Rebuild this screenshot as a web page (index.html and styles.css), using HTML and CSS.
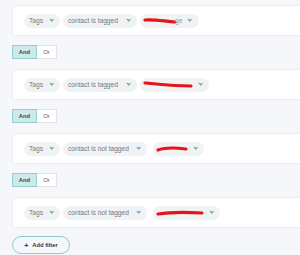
FILE: index.html
```html
<!DOCTYPE html>
<html>
<head>
<meta charset="utf-8">
<link rel="stylesheet" href="styles.css">
</head>
<body>
<div class="list">
  <div class="card">
    <span class="pill p-tags">Tags<i class="chev"></i></span>
    <span class="pill p-cond">contact is tagged<i class="chev"></i></span>
    <span class="pill p-val"><svg class="scrib" width="34" height="8" viewBox="0 0 34 8"><path d="M2 3 C10 2,20 4,32 5" stroke="#e4141b" stroke-width="3.2" stroke-linecap="round" fill="none"/></svg><span class="ghost">ge</span><i class="chev"></i></span>
  </div>
  <div class="andor"><span class="seg on">And</span><span class="seg">Or</span></div>
  <div class="card">
    <span class="pill p-tags">Tags<i class="chev"></i></span>
    <span class="pill p-cond">contact is tagged<i class="chev"></i></span>
    <span class="pill p-val"><svg class="scrib" width="50" height="8" viewBox="0 0 50 8"><path d="M2 2 C14 3,30 5,48 5" stroke="#e4141b" stroke-width="3.2" stroke-linecap="round" fill="none"/></svg><i class="chev"></i></span>
  </div>
  <div class="andor"><span class="seg on">And</span><span class="seg">Or</span></div>
  <div class="card">
    <span class="pill p-tags">Tags<i class="chev"></i></span>
    <span class="pill p-cond2">contact is not tagged<i class="chev"></i></span>
    <span class="pill p-val"><svg class="scrib" width="32" height="8" viewBox="0 0 32 8"><path d="M2 5 C10 2,22 3,30 4" stroke="#e4141b" stroke-width="3.2" stroke-linecap="round" fill="none"/></svg><i class="chev"></i></span>
  </div>
  <div class="andor"><span class="seg on">And</span><span class="seg">Or</span></div>
  <div class="card">
    <span class="pill p-tags">Tags<i class="chev"></i></span>
    <span class="pill p-cond2">contact is not tagged<i class="chev"></i></span>
    <span class="pill p-val"><svg class="scrib" width="48" height="8" viewBox="0 0 48 8"><path d="M2 5 C14 3,30 3,46 4" stroke="#e4141b" stroke-width="3.2" stroke-linecap="round" fill="none"/></svg><i class="chev"></i></span>
  </div>
  <button class="add"><span class="plus">+</span>Add filter</button>
</div>
</body>
</html>
```
FILE: styles.css
```css
html, body {
  margin: 0;
  padding: 0;
  background: #f6f7fb;
  font-family: "Liberation Sans", Arial, sans-serif;
  overflow: hidden;
}
.list {
  padding: 5px 0 0 12px;
  display: flex;
  flex-direction: column;
  align-items: flex-start;
}
.card {
  box-sizing: border-box;
  width: 300px;
  height: 31px;
  background: #fff;
  border: 1px solid #eceef3;
  border-right: none;
  border-radius: 4px 0 0 4px;
  display: flex;
  align-items: center;
  padding-left: 11px;
  gap: 3px;
  margin-bottom: 9px;
}
.pill {
  box-sizing: border-box;
  height: 14px;
  border-radius: 7px;
  background: #f1f2f4;
  display: flex;
  align-items: center;
  padding: 0 7px 0 5px;
  font-size: 6.6px;
  color: #74777e;
  white-space: nowrap;
}
.p-tags { width: 36px; }
.p-cond { width: 74px; }
.p-cond2 { width: 84px; margin-right: 3px; }
.chev {
  display: inline-block;
  width: 2.4px;
  height: 2.4px;
  border-right: 1px solid #3b9fa6;
  border-bottom: 1px solid #3b9fa6;
  transform: rotate(45deg);
  margin-left: auto;
  margin-top: -2px;
}
.p-val { padding-left: 3px; }
.scrib { display: block; }
.ghost { color: #9a9ca2; margin-left: -2px; }
.p-val .chev { margin-left: 6px; }
.andor {
  display: flex;
  height: 14px;
  margin-bottom: 10px;
}
.seg {
  box-sizing: border-box;
  height: 14px;
  display: flex;
  align-items: center;
  justify-content: center;
  font-size: 5.8px;
  color: #555;
  background: #fff;
  border: 1px solid #e2e4e8;
  border-left: none;
  width: 20px;
}
.seg.on {
  width: 25px;
  background: #cfe9ea;
  border: 1px solid #93cfd3;
  color: #3d4a4c;
  font-weight: bold;
}
.add {
  box-sizing: border-box;
  margin-top: -1px;
  width: 58px;
  height: 18px;
  border: 1px solid #8ccbd0;
  border-radius: 9px;
  background: #f6f7fb;
  font-family: "Liberation Sans", Arial, sans-serif;
  font-size: 5.8px;
  font-weight: bold;
  color: #2f3a4a;
  display: flex;
  align-items: center;
  justify-content: center;
  padding: 0;
}
.plus { font-size: 7px; margin-right: 4px; }
```
